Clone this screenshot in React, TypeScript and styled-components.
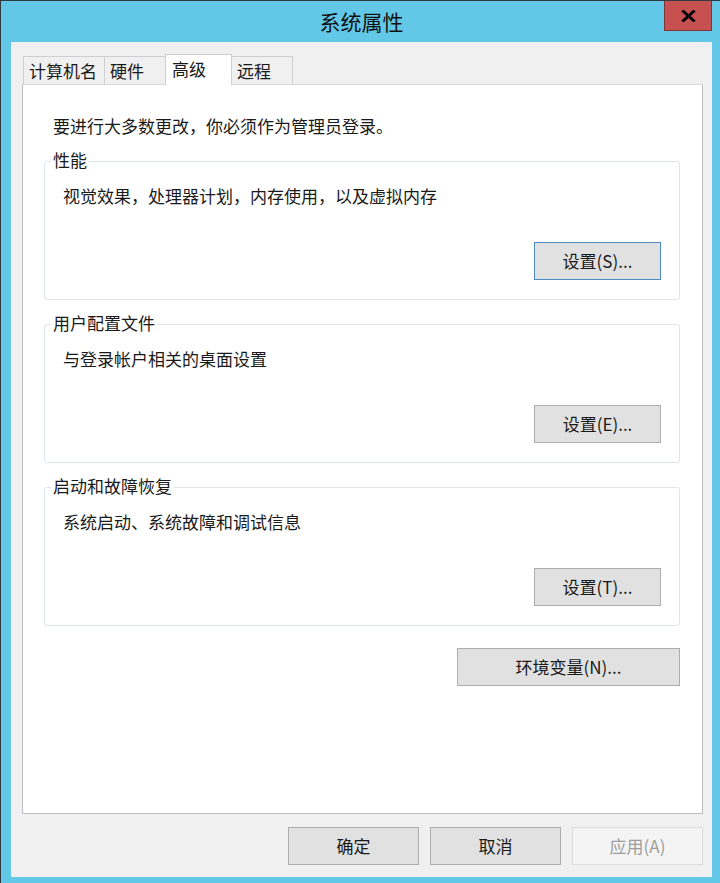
import React from "react";
import styled, { createGlobalStyle } from "styled-components";

const GlobalStyle = createGlobalStyle`
  html, body { margin: 0; padding: 0; background: #ffffff; }
  body { font-family: "Noto Sans CJK SC", "Liberation Sans", sans-serif; }
  * { box-sizing: border-box; }
`;

const Frame = styled.div`
  width: 720px;
  height: 883px;
  background: #63c8e8;
  border-top: 1px solid #2e3a3f;
  border-left: 1px solid #2e3a3f;
  padding: 0 8px 6px 10px;
  display: flex;
  flex-direction: column;
`;

const TitleBar = styled.div`
  height: 41px;
  display: grid;
  grid-template-columns: 1fr auto 1fr;
  align-items: start;
`;

const Title = styled.div`
  grid-column: 2;
  font-size: 21px;
  line-height: 41px;
  color: #111;
`;

const CloseButton = styled.div`
  grid-column: 3;
  justify-self: end;
  width: 48px;
  height: 30px;
  background: #c75050;
  border: 1px solid #7e3535;
  border-top: none;
  display: flex;
  align-items: center;
  justify-content: center;
`;

const Client = styled.div`
  flex: 1;
  background: #f0f0f0;
  padding: 0 9px 12px 11px;
  display: flex;
  flex-direction: column;
`;

const TabStrip = styled.div`
  height: 42px;
  display: flex;
  align-items: flex-end;
  padding-left: 1px;
`;

const Tab = styled.div<{ $active?: boolean }>`
  position: relative;
  z-index: ${(p) => (p.$active ? 1 : 0)};
  height: ${(p) => (p.$active ? "31px" : "28px")};
  min-width: ${(p) => (p.$active ? "67px" : "62px")};
  margin-bottom: ${(p) => (p.$active ? "-1px" : "0")};
  padding: ${(p) => (p.$active ? "0 7px 3px 6px" : "0 7px 0 5px")};
  background: ${(p) => (p.$active ? "#ffffff" : "#f0f0f0")};
  border: 1px solid #cfcfcf;
  border-bottom: none;
  display: flex;
  align-items: center;
  font-size: 17px;
  line-height: 22px;
  color: #1a1a1a;
  & + & { margin-left: -1px; }
`;

const Panel = styled.div`
  flex: 1;
  background: #ffffff;
  border: 1px solid #bdbdc3;
  border-top-color: #d9d9d9;
  padding: 30px 22px 0 21px;
  display: flex;
  flex-direction: column;
`;

const Intro = styled.p`
  margin: 0 0 0 9px;
  font-size: 17px;
  line-height: 22px;
  color: #1a1a1a;
`;

const Groups = styled.div`
  margin-top: 24px;
  display: flex;
  flex-direction: column;
  gap: 24px;
`;

const Group = styled.section`
  position: relative;
  border: 1px solid #dde5ed;
  border-radius: 3px;
  padding: 23px 18px 19px 18px;
  display: flex;
  flex-direction: column;
`;

const Legend = styled.span`
  position: absolute;
  top: -13px;
  left: 6px;
  padding: 0 2px;
  background: #ffffff;
  font-size: 17px;
  line-height: 22px;
  color: #1a1a1a;
`;

const Desc = styled.p`
  margin: 0;
  font-size: 17px;
  line-height: 22px;
  color: #1a1a1a;
`;

const Button = styled.button<{ $width: number; $focused?: boolean }>`
  width: ${(p) => p.$width}px;
  height: 38px;
  padding: 0;
  background: ${(p) => (p.disabled ? "#f4f4f4" : "#e1e1e1")};
  border: 1px solid
    ${(p) => (p.disabled ? "#dcdcdc" : p.$focused ? "#4f8cc6" : "#adadad")};
  font-family: "Noto Sans CJK SC", "Liberation Sans", sans-serif;
  font-size: 17px;
  line-height: 22px;
  color: ${(p) => (p.disabled ? "#9d9d9d" : "#1a1a1a")};
  display: flex;
  align-items: center;
  justify-content: center;
`;

const GroupButton = styled(Button)`
  margin-top: 35px;
  align-self: flex-end;
`;

const EnvButton = styled(Button)`
  margin-top: 22px;
  align-self: flex-end;
`;

const Footer = styled.div`
  margin-top: 13px;
  display: flex;
  justify-content: flex-end;
  gap: 11px;
`;

const CloseIcon = () => (
  <svg width="15" height="12" viewBox="0 0 15 12">
    <path d="M2.5 1.5 L12.5 10.5 M12.5 1.5 L2.5 10.5" stroke="#000" strokeWidth="3" strokeLinecap="square" />
  </svg>
);

const groups = [
  { title: "性能", desc: "视觉效果，处理器计划，内存使用，以及虚拟内存", btn: "设置(S)...", focused: true },
  { title: "用户配置文件", desc: "与登录帐户相关的桌面设置", btn: "设置(E)...", focused: false },
  { title: "启动和故障恢复", desc: "系统启动、系统故障和调试信息", btn: "设置(T)...", focused: false },
];

const tabs = ["计算机名", "硬件", "高级", "远程"];

export default function App() {
  return (
    <>
      <GlobalStyle />
      <Frame>
        <TitleBar>
          <Title>系统属性</Title>
          <CloseButton>
            <CloseIcon />
          </CloseButton>
        </TitleBar>
        <Client>
          <TabStrip>
            {tabs.map((t) => (
              <Tab key={t} $active={t === "高级"}>
                {t}
              </Tab>
            ))}
          </TabStrip>
          <Panel>
            <Intro>要进行大多数更改，你必须作为管理员登录。</Intro>
            <Groups>
              {groups.map((g) => (
                <Group key={g.title}>
                  <Legend>{g.title}</Legend>
                  <Desc>{g.desc}</Desc>
                  <GroupButton $width={127} $focused={g.focused}>
                    {g.btn}
                  </GroupButton>
                </Group>
              ))}
            </Groups>
            <EnvButton $width={223}>环境变量(N)...</EnvButton>
          </Panel>
          <Footer>
            <Button $width={131}>确定</Button>
            <Button $width={131}>取消</Button>
            <Button $width={131} disabled>
              应用(A)
            </Button>
          </Footer>
        </Client>
      </Frame>
    </>
  );
}
